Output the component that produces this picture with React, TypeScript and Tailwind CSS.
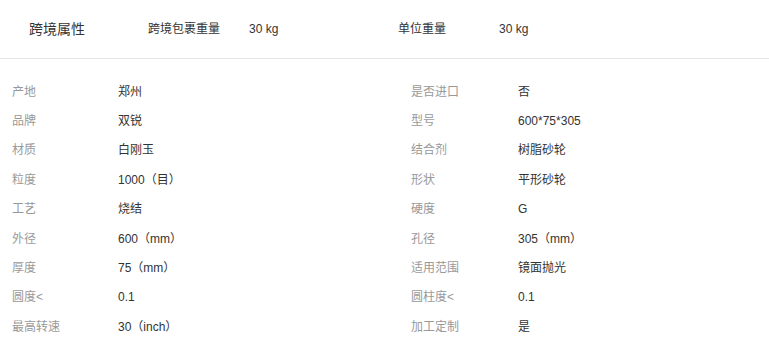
import React from "react";

const rows: [string, string, string, string][] = [
  ["产地", "郑州", "是否进口", "否"],
  ["品牌", "双锐", "型号", "600*75*305"],
  ["材质", "白刚玉", "结合剂", "树脂砂轮"],
  ["粒度", "1000（目）", "形状", "平形砂轮"],
  ["工艺", "烧结", "硬度", "G"],
  ["外径", "600（mm）", "孔径", "305（mm）"],
  ["厚度", "75（mm）", "适用范围", "镜面抛光"],
  ["圆度<", "0.1", "圆柱度<", "0.1"],
  ["最高转速", "30（inch）", "加工定制", "是"],
];

export default function App() {
  return (
    <div
      className="w-[769px] h-[348px] bg-white overflow-hidden"
      style={{ fontFamily: '"Liberation Sans", Arial, "Noto Sans CJK SC", sans-serif' }}
    >
      <div className="h-[59px] flex items-center border-b border-[#e5e5e5] text-[#333]">
        <div className="pl-[29px] w-[148px] text-[14px]">跨境属性</div>
        <div className="w-[101px] text-[12px]">跨境包裹重量</div>
        <div className="w-[149px] text-[12px]">30 kg</div>
        <div className="w-[101px] text-[12px]">单位重量</div>
        <div className="text-[12px]">30 kg</div>
      </div>
      <div className="pt-[18px] pl-[12px] text-[12px]">
        {rows.map((r, i) => (
          <div key={i} className="flex items-center h-[29.375px]">
            <div className="w-[106px] text-[#999]">{r[0]}</div>
            <div className="w-[293px] text-[#333]">{r[1]}</div>
            <div className="w-[107px] text-[#999]">{r[2]}</div>
            <div className="text-[#333]">{r[3]}</div>
          </div>
        ))}
      </div>
    </div>
  );
}
